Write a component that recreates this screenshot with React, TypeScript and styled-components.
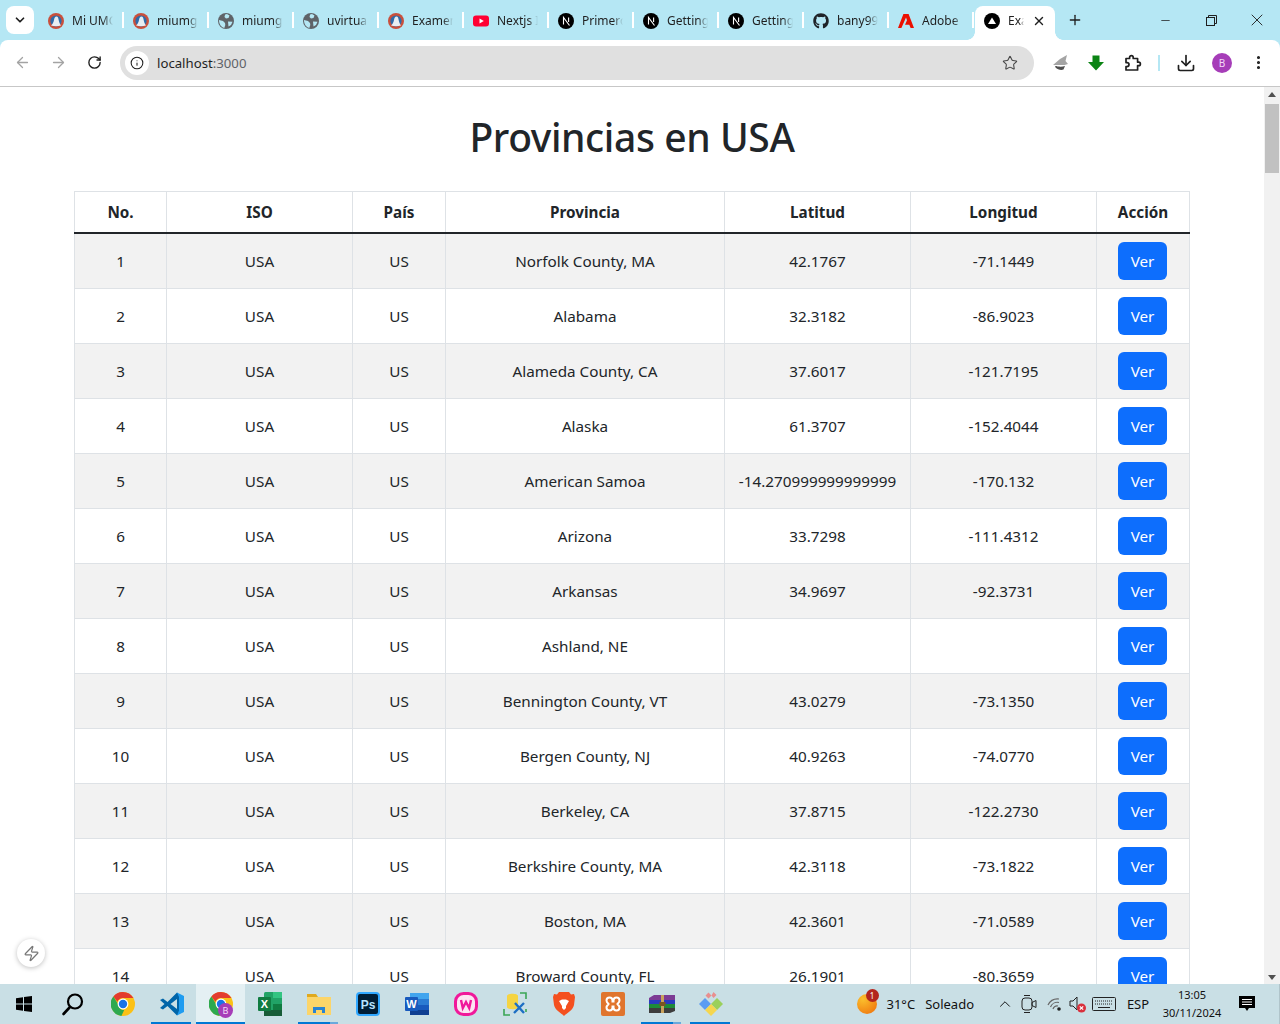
import React from "react";
import styled, { createGlobalStyle } from "styled-components";
import {
  ArrowLeft,
  ArrowRight,
  ChevronDown,
  ChevronUp,
  Download,
  Info,
  Minus,
  MoreVertical,
  Plus,
  RotateCw,
  Star,
  X,
  Zap,
} from "lucide-react";
import { FaGithub } from "react-icons/fa";

const FONT = `"Noto Sans", "Open Sans", "Liberation Sans", sans-serif`;

const GlobalStyle = createGlobalStyle`
  html, body { margin: 0; padding: 0; height: 100%; overflow: hidden; }
  body { font-family: ${FONT}; color: #212529; background: #fff; }
  * { box-sizing: border-box; }
`;

const Screen = styled.div`
  width: 1280px;
  height: 1024px;
  display: flex;
  flex-direction: column;
  overflow: hidden;
`;

/* ---------- browser chrome ---------- */

const BrowserTop = styled.header`
  background: #b5e7f4;
  flex: none;
`;

const TabStrip = styled.div`
  height: 40px;
  display: flex;
  align-items: flex-start;
  padding-left: 6px;
`;

const TabSearch = styled.button`
  width: 28px;
  height: 28px;
  margin: 6px 4px 0 0;
  padding: 0;
  border: 0;
  border-radius: 8px;
  background: #fff;
  display: flex;
  align-items: center;
  justify-content: center;
  color: #1f1f1f;
`;

const Tab = styled.div<{ $active?: boolean }>`
  position: relative;
  flex: none;
  width: ${(p) => (p.$active ? "80px" : "85px")};
  height: 34px;
  margin-top: 6px;
  padding: 0 ${(p) => (p.$active ? "9px" : "10px")} 4px ${(p) => (p.$active ? "9px" : "10px")};
  margin-left: ${(p) => (p.$active ? "2px" : "0")};
  display: flex;
  align-items: center;
  gap: 8px;
  background: ${(p) => (p.$active ? "#fff" : "transparent")};
  border-radius: 8px 8px 0 0;
  color: #1f1f1f;

  ${(p) =>
    p.$active
      ? `
    &::before, &::after {
      content: "";
      position: absolute;
      bottom: 0;
      width: 8px;
      height: 8px;
    }
    &::before { left: -8px; background: radial-gradient(circle at 0 0, transparent 7.5px, #fff 8px); }
    &::after { right: -8px; background: radial-gradient(circle at 100% 0, transparent 7.5px, #fff 8px); }
  `
      : `
    &::after {
      content: "";
      position: absolute;
      right: -1px;
      top: 6px;
      width: 2px;
      height: 16px;
      background: #fff;
    }
  `}
`;

const TabLabel = styled.span`
  flex: 1;
  min-width: 0;
  overflow: hidden;
  white-space: nowrap;
  font-size: 12px;
  line-height: 16px;
  -webkit-mask-image: linear-gradient(to right, #000 76%, transparent 100%);
  mask-image: linear-gradient(to right, #000 76%, transparent 100%);
`;

const TabClose = styled.span`
  display: flex;
  flex: none;
  color: #1f1f1f;
`;

const NewTab = styled.div`
  width: 20px;
  margin: 12px 0 0 10px;
  display: flex;
  justify-content: center;
  color: #1f1f1f;
`;

const WindowControls = styled.div`
  margin-left: auto;
  display: flex;
  height: 40px;
`;

const WindowButton = styled.div`
  width: 46px;
  display: flex;
  align-items: center;
  justify-content: center;
  color: #1f1f1f;
`;

const Toolbar = styled.div`
  height: 47px;
  padding: 6px 0 7px 4px;
  display: flex;
  align-items: center;
  background: #fff;
  border-radius: 8px 8px 0 0;
  border-bottom: 1px solid #c7c7c7;
`;

const NavButton = styled.div<{ $off?: boolean; $w?: number }>`
  width: ${(p) => p.$w ?? 36}px;
  flex: none;
  display: flex;
  align-items: center;
  justify-content: center;
  color: ${(p) => (p.$off ? "#a3a3a3" : "#1f1f1f")};
`;

const Omnibox = styled.div`
  width: 914px;
  height: 34px;
  margin: 0 9px 0 8px;
  padding: 0 16px 0 5px;
  flex: none;
  display: flex;
  align-items: center;
  background: #e0e0e0;
  border-radius: 17px;
`;

const SiteChip = styled.div`
  width: 24px;
  height: 24px;
  border-radius: 50%;
  background: #fff;
  display: flex;
  align-items: center;
  justify-content: center;
  color: #1f1f1f;
`;

const Url = styled.div`
  margin-left: 8px;
  flex: 1;
  font-size: 13.2px;
  color: #1f1f1f;
  span {
    color: #5f6368;
  }
`;

const StarSlot = styled.div`
  display: flex;
  color: #474747;
`;

const ToolbarDivider = styled.div`
  width: 2px;
  height: 16px;
  margin: 0 8px 0 5px;
  background: #b5e7f4;
  flex: none;
`;

const Avatar = styled.div<{ $size?: number }>`
  width: ${(p) => p.$size ?? 20}px;
  height: ${(p) => p.$size ?? 20}px;
  border-radius: 50%;
  background: #a63db8;
  color: #f3d9f7;
  font-size: ${(p) => ((p.$size ?? 20) > 16 ? 10 : 9)}px;
  display: flex;
  align-items: center;
  justify-content: center;
`;

/* ---------- page ---------- */

const Viewport = styled.div`
  position: relative;
  flex: 1;
  min-height: 0;
  display: flex;
  overflow: hidden;
`;

const Page = styled.main`
  flex: 1;
  min-width: 0;
  overflow: hidden;
  padding: 26px 74px 0;
`;

const Title = styled.h1`
  margin: 0 0 30px;
  font-size: 39px;
  line-height: 48px;
  font-weight: 500;
  letter-spacing: -0.4px;
  text-align: center;
`;

const Table = styled.table`
  width: 1115px;
  table-layout: fixed;
  border-collapse: collapse;
  font-size: 15.25px;
  line-height: 24px;
`;

const Col = styled.col<{ $width: number }>`
  width: ${(p) => p.$width}px;
`;

const Th = styled.th`
  height: 41px;
  padding: 8px;
  border: 1px solid #dee2e6;
  border-bottom: 2px solid #212529;
  font-weight: 700;
  text-align: center;
`;

const Row = styled.tr<{ $striped: boolean }>`
  background: ${(p) => (p.$striped ? "#f2f2f2" : "#fff")};
`;

const Td = styled.td`
  height: 55px;
  padding: 8px;
  border: 1px solid #dee2e6;
  text-align: center;
  white-space: nowrap;
`;

const VerButton = styled.button`
  width: 49px;
  height: 38px;
  padding: 0;
  border: 0;
  border-radius: 6px;
  background: #0d6efd;
  color: #fff;
  font: inherit;
  display: block;
  margin: 0 0 0 13px;
`;

const Scrollbar = styled.aside`
  width: 16px;
  flex: none;
  background: #f1f1f1;
  display: flex;
  flex-direction: column;
  align-items: center;
  justify-content: space-between;
  position: relative;
`;

const ScrollArrow = styled.div<{ $down?: boolean }>`
  margin: ${(p) => (p.$down ? "0 0 4px" : "5px 0 0")};
  width: 0;
  height: 0;
  border-left: 4.5px solid transparent;
  border-right: 4.5px solid transparent;
  ${(p) => (p.$down ? "border-top: 5px solid #505050;" : "border-bottom: 5px solid #505050;")}
`;

const ScrollThumb = styled.div`
  position: absolute;
  top: 17px;
  left: 1px;
  width: 14px;
  height: 69px;
  background: #c1c1c1;
`;

const DevBadge = styled.div`
  position: absolute;
  left: 17px;
  bottom: 17px;
  width: 28px;
  height: 28px;
  border-radius: 50%;
  background: #fff;
  box-shadow: 0 1px 5px rgba(0, 0, 0, 0.25);
  display: flex;
  align-items: center;
  justify-content: center;
  color: #777;
`;

/* ---------- taskbar ---------- */

const Taskbar = styled.footer`
  height: 40px;
  flex: none;
  display: flex;
  align-items: center;
  background: #c9dfe5;
  border-right: 1px solid #b0c4ca;
  position: relative;
  z-index: 1;
  color: #111;
`;

const TaskSlot = styled.div<{ $w?: number; $active?: boolean; $running?: boolean; $more?: boolean }>`
  position: relative;
  width: ${(p) => p.$w ?? 49}px;
  height: 40px;
  flex: none;
  display: flex;
  align-items: center;
  justify-content: center;
  background: ${(p) => (p.$active ? "#e4f0f3" : "transparent")};

  ${(p) =>
    p.$running
      ? `&::after {
    content: "";
    position: absolute;
    bottom: 0;
    left: ${p.$active ? 0 : 4}px;
    right: ${p.$active ? 0 : 5}px;
    height: 2px;
    background: ${p.$more ? "linear-gradient(to right, #0078d4 80%, #6aa9dc 80%)" : "#0078d4"};
  }`
      : ""}
`;

const ChromeBadge = styled.div`
  position: absolute;
  right: 12px;
  bottom: 6px;
`;

const Tray = styled.div`
  margin-left: auto;
  display: flex;
  align-items: center;
  height: 40px;
  font-size: 13px;
`;

const Weather = styled.div`
  position: relative;
  width: 20px;
  height: 20px;
  margin-right: 10px;
  border-radius: 50%;
  background: radial-gradient(circle at 30% 25%, #fbc02d, #f0790f 85%);
`;

const WeatherBadge = styled.div`
  position: absolute;
  top: -5px;
  right: -2px;
  width: 13px;
  height: 13px;
  border-radius: 50%;
  background: #b3261e;
  color: #fff;
  font-size: 8px;
  line-height: 13px;
  text-align: center;
`;

const TrayText = styled.span<{ $gap?: number }>`
  margin-right: ${(p) => p.$gap ?? 0}px;
  white-space: nowrap;
`;

const TraySlot = styled.div<{ $w: number }>`
  width: ${(p) => p.$w}px;
  display: flex;
  justify-content: center;
  align-items: center;
  flex: none;
`;

const Clock = styled.div`
  width: 62px;
  margin-left: 7px;
  text-align: center;
  font-size: 11px;
  line-height: 18px;
`;

/* ---------- drawings ---------- */

const UmgIcon = () => (
  <svg width="16" height="16" viewBox="0 0 16 16">
    <circle cx="8" cy="8" r="8" fill="#c9503c" />
    <circle cx="8" cy="8" r="5.600" fill="#2f6aa8" />
    <path d="M3 12.500c1.500-1 2.500-3 3-5.500.4-2 1-3.500 2.500-3.500S10.300 5 10.800 7.500c.4 2 1.200 3.800 2.200 5-3 1-7 1-10 0z" fill="#e9eef2" />
  </svg>
);

const GlobeIcon = () => (
  <svg width="16" height="16" viewBox="0 0 16 16">
    <circle cx="8" cy="8" r="8" fill="#5f6368" />
    <path d="M9 1 11.500 2.500 10.500 5l-2.500.6L6.500 4l.6-2.500zM1 7 5 8l2 2 .3 2-1 3C3 14 1 11 1 7zM10 8.500l4.500.3-1.500 3.200-2.500 1.500z" fill="#b5e7f4" />
  </svg>
);

const YoutubeIcon = () => (
  <svg width="16" height="16" viewBox="0 0 16 16">
    <rect y="2.500" width="16" height="11" rx="3" fill="#ff0033" />
    <path d="M6.500 5.500v5L10.800 8z" fill="#fff" />
  </svg>
);

const NextIcon = () => (
  <svg width="16" height="16" viewBox="0 0 16 16">
    <circle cx="8" cy="8" r="8" fill="#000" />
    <path d="M5.500 11.500v-7l6 8M10.600 4.500v4.500" stroke="#fff" strokeWidth="1.100" fill="none" />
  </svg>
);

const AdobeIcon = () => (
  <svg width="16" height="16" viewBox="0 0 16 16">
    <path d="M5.400 1h5.200L16 15h-3.400l-1.300-3.200H7L9 7.200 8 4.600 3.400 15H0z" fill="#eb1000" />
  </svg>
);

const VercelIcon = () => (
  <svg width="16" height="16" viewBox="0 0 16 16">
    <circle cx="8" cy="8" r="8" fill="#000" />
    <path d="M8 4.600 12 11H4z" fill="#fff" />
  </svg>
);

const SharkIcon = () => (
  <svg width="18" height="18" viewBox="0 0 18 18">
    <path d="M1 11 8 5l7-4-1.500 6L16 10l-5 1.500z" fill="#a4a4a4" />
    <path d="M3 11.500c3 1.500 7 1.500 10 .5l-1.500 3.500c-2.500 1-6 0-8-2z" fill="#4f4f4f" />
    <path d="M3 11.500h9" stroke="#fff" strokeWidth="1" />
  </svg>
);

const GreenArrow = () => (
  <svg width="18" height="18" viewBox="0 0 18 18">
    <path d="M5.500 1.500h7V8H17l-8 8.500L1 8h4.500z" fill="#0b8414" />
  </svg>
);

const PuzzleIcon = () => (
  <svg width="18" height="18" viewBox="0 0 18 18">
    <path
      d="M2 4.500h3.600V3.400a1.800 1.800 0 0 1 3.600 0v1.100h4.400v3.700h1.100a1.700 1.700 0 0 1 0 3.400h-1.100V16H2v-3.400h1a2 2 0 0 0 0-4H2z"
      fill="none"
      stroke="#1f1f1f"
      strokeWidth="1.700"
      strokeLinejoin="round"
    />
  </svg>
);

const ChromeIcon = ({ size = 24 }: { size?: number }) => (
  <svg width={size} height={size} viewBox="0 0 24 24">
    <circle cx="12" cy="12" r="12" fill="#fbc116" />
    <path d="M12 0a12 12 0 0 1 10.400 6H12a6 6 0 0 0-5.600 3.800L2.400 4.400A12 12 0 0 1 12 0z" fill="#e33b2e" />
    <path d="M2.400 4.400 7.600 13a5 5 0 0 0 5.600 4.900l-2.800 6A12 12 0 0 1 2.400 4.400z" fill="#2da94f" />
    <circle cx="12" cy="12" r="5.400" fill="#fff" />
    <circle cx="12" cy="12" r="4.200" fill="#1a73e8" />
  </svg>
);

const WindowsIcon = () => (
  <svg width="16" height="16" viewBox="0 0 16 16">
    <path d="M0 2.200 7 1.200v6.400H0zM8 1 16 0v7.600H8zM0 8.500h7v6.300l-7-1zM8 8.500h8V16l-8-1.100z" fill="#000" />
  </svg>
);

const SearchGlass = () => (
  <svg width="24" height="24" viewBox="0 0 24 24">
    <circle cx="14" cy="9.500" r="7" fill="none" stroke="#000" strokeWidth="2.200" />
    <path d="M9 15 2.500 22" stroke="#000" strokeWidth="2.600" strokeLinecap="round" />
  </svg>
);

const VsCodeIcon = () => (
  <svg width="24" height="24" viewBox="0 0 24 24">
    <path d="M17 0.500 24 4v16l-7 3.500z" fill="#1f9cf0" />
    <path d="M17 .5 7.500 10 3 6.500 0 8l4.500 4L0 16l3 1.500L7.500 14l9.500 9.500 2-5V5z" fill="#0065a9" />
    <path d="M17 7v10l-6.500-5z" fill="#c9dfe5" />
  </svg>
);

const ExcelIcon = () => (
  <svg width="24" height="24" viewBox="0 0 24 24">
    <rect x="6" y="0" width="18" height="24" rx="1.500" fill="#21a366" />
    <rect x="15" y="0" width="9" height="6" fill="#33c481" />
    <rect x="15" y="12" width="9" height="6" fill="#107c41" />
    <rect x="6" y="18" width="18" height="6" fill="#185c37" />
    <rect x="0" y="5" width="13" height="14" rx="1" fill="#107c41" />
    <text x="6.500" y="16" fontSize="11" fontWeight="700" fill="#fff" textAnchor="middle" fontFamily="Liberation Sans">X</text>
  </svg>
);

const FolderIcon = () => (
  <svg width="24" height="24" viewBox="0 0 24 24">
    <path d="M0 2h9l2 3H0z" fill="#e0a91e" />
    <rect y="5" width="24" height="18" fill="#fcd569" />
    <path d="M6 21v-6h12v6h-3v-3H9v3z" fill="#2a84d2" />
  </svg>
);

const PhotoshopIcon = () => (
  <svg width="24" height="24" viewBox="0 0 24 24">
    <rect x="1" y="1" width="22" height="22" rx="3" fill="#001e36" stroke="#31a8ff" strokeWidth="2" />
    <text x="12" y="16.500" fontSize="12" fontWeight="700" fill="#b7e3ff" textAnchor="middle" fontFamily="Liberation Sans">Ps</text>
  </svg>
);

const WordIcon = () => (
  <svg width="24" height="24" viewBox="0 0 24 24">
    <rect x="5" y="1" width="19" height="22" rx="1.500" fill="#2b7cd3" />
    <rect x="5" y="1" width="19" height="6" fill="#41a5ee" />
    <rect x="5" y="13" width="19" height="5" fill="#185abd" />
    <rect x="5" y="18" width="19" height="5" fill="#103f91" />
    <rect x="0" y="5" width="13" height="14" rx="1" fill="#185abd" />
    <text x="6.500" y="16" fontSize="11" fontWeight="700" fill="#fff" textAnchor="middle" fontFamily="Liberation Sans">W</text>
  </svg>
);

const WampIcon = () => (
  <svg width="24" height="24" viewBox="0 0 24 24">
    <rect x="1.500" y="1.500" width="21" height="21" rx="8" fill="#fde4f2" stroke="#f0189a" strokeWidth="3" />
    <path d="M7 8l1.800 8L12 10l3.200 6L17 8" fill="none" stroke="#f0189a" strokeWidth="2.400" />
  </svg>
);

const DbToolIcon = () => (
  <svg width="24" height="24" viewBox="0 0 24 24">
    <path d="M4 4c0-3 11-3 11 0v11c0 3-11 3-11 0z" fill="#f5d442" />
    <path d="M17 1h6v6M1 17v6h6M23 17v3" fill="none" stroke="#3aa655" strokeWidth="1.600" />
    <path d="M11 21 21 11M12 11l9 10" stroke="#1d6fc4" strokeWidth="2.400" />
  </svg>
);

const BraveIcon = () => (
  <svg width="22" height="24" viewBox="0 0 22 24">
    <path d="M6 0h10l2 2.500 3-.5 1 3-1 8c-1 5-7 8-10 11C8 21 2 18 1 13L0 5l1-3 3 .5z" fill="#f4501f" />
    <path d="M6 9l3-1.500h4L16 9l-3 5v2l-2 2-2-2v-2z" fill="#fff" />
  </svg>
);

const XamppIcon = () => (
  <svg width="24" height="24" viewBox="0 0 24 24">
    <rect width="24" height="24" rx="2" fill="#e0752d" />
    <path
      d="M8.500 5.500a3 3 0 0 0-3 3c0 1.600 1 2.500 2 3.500-1 1-2 1.900-2 3.500a3 3 0 0 0 6 0v-1h1v1a3 3 0 0 0 6 0c0-1.600-1-2.500-2-3.500 1-1 2-1.900 2-3.500a3 3 0 0 0-6 0v1h-1v-1a3 3 0 0 0-3-3z"
      fill="none"
      stroke="#fff"
      strokeWidth="2"
    />
  </svg>
);

const WinrarIcon = () => (
  <svg width="26" height="20" viewBox="0 0 26 20">
    <path d="M0 4l5-3h21v5H0z" fill="#7c3b94" />
    <rect y="6" width="26" height="4" fill="#2a3ac0" />
    <rect y="10" width="26" height="4" fill="#1d8a3a" />
    <path d="M0 14h26v3l-5 2H0z" fill="#3d3d3d" />
    <rect x="12" y="1" width="3" height="18" fill="#c9a25c" />
    <rect x="10.500" y="8" width="6" height="4" fill="#7a5522" />
  </svg>
);

const GitToolIcon = () => (
  <svg width="26" height="26" viewBox="0 0 26 26">
    <path d="M7 7l6 6-6 6-6-6z" fill="#5b9cf2" />
    <path d="M19 7l6 6-6 6-6-6z" fill="#9ad05b" />
    <path d="M13 13l6 6-6 6-6-6z" fill="#f5d64e" />
    <path d="M10.500 1.500l3 3-3 3-3-3zM15.500 1l3 3-3 3-2-2.500z" fill="#e98f8f" />
  </svg>
);

const MeetIcon = () => (
  <svg width="16" height="20" viewBox="0 0 16 20" fill="none" stroke="#222" strokeWidth="1">
    <rect x="1" y="4" width="10" height="12" rx="3" />
    <path d="M11 8.500 15 6.500v7l-4-2zM3 1.500h6M3 18.500h6" />
  </svg>
);

const WifiIcon = () => (
  <svg width="16" height="16" viewBox="0 0 16 16" fill="none" stroke="#666" strokeWidth="1.200">
    <path d="M1 9a11 11 0 0 1 11-6M3.500 11A7.500 7.500 0 0 1 12 6.500M6 13a4 4 0 0 1 5-3" />
    <circle cx="12" cy="13" r="1.800" fill="#222" stroke="none" />
  </svg>
);

const SpeakerMuted = () => (
  <svg width="17" height="18" viewBox="0 0 17 18">
    <path d="M1 6h3l4-4v13l-4-4H1z" fill="none" stroke="#222" strokeWidth="1" />
    <circle cx="12.500" cy="13" r="4.500" fill="#d9303c" />
    <path d="M10.800 11.300l3.400 3.400M14.200 11.300l-3.400 3.400" stroke="#fff" strokeWidth="1.200" />
  </svg>
);

const KeyboardIcon = () => (
  <svg width="24" height="14" viewBox="0 0 24 14" fill="none" stroke="#222">
    <rect x=".5" y=".5" width="23" height="13" rx="1" />
    <path d="M3 4h18M3 7h18" strokeDasharray="1 1" />
    <path d="M6 10.500h12" />
  </svg>
);

const NotificationIcon = () => (
  <svg width="18" height="18" viewBox="0 0 18 18">
    <path d="M1 1h16v12h-6l-2 3-2-3H1z" fill="#000" />
    <path d="M4 4.500h10M4 7h10M4 9.500h10" stroke="#fff" strokeWidth="1" />
  </svg>
);

/* ---------- data ---------- */

const tabs: { icon: React.ReactNode; label: string }[] = [
  { icon: <UmgIcon />, label: "Mi UMG" },
  { icon: <UmgIcon />, label: "miumg" },
  { icon: <GlobeIcon />, label: "miumg" },
  { icon: <GlobeIcon />, label: "uvirtual" },
  { icon: <UmgIcon />, label: "Examen" },
  { icon: <YoutubeIcon />, label: "Nextjs I" },
  { icon: <NextIcon />, label: "Primero" },
  { icon: <NextIcon />, label: "Getting" },
  { icon: <NextIcon />, label: "Getting" },
  { icon: <FaGithub size={16} color="#1f2328" />, label: "bany99" },
  { icon: <AdobeIcon />, label: "Adobe" },
];

const columns = [
  { title: "No.", width: 92 },
  { title: "ISO", width: 186 },
  { title: "País", width: 93 },
  { title: "Provincia", width: 279 },
  { title: "Latitud", width: 186 },
  { title: "Longitud", width: 186 },
  { title: "Acción", width: 93 },
];

const provinces = [
  ["Norfolk County, MA", "42.1767", "-71.1449"],
  ["Alabama", "32.3182", "-86.9023"],
  ["Alameda County, CA", "37.6017", "-121.7195"],
  ["Alaska", "61.3707", "-152.4044"],
  ["American Samoa", "-14.270999999999999", "-170.132"],
  ["Arizona", "33.7298", "-111.4312"],
  ["Arkansas", "34.9697", "-92.3731"],
  ["Ashland, NE", "", ""],
  ["Bennington County, VT", "43.0279", "-73.1350"],
  ["Bergen County, NJ", "40.9263", "-74.0770"],
  ["Berkeley, CA", "37.8715", "-122.2730"],
  ["Berkshire County, MA", "42.3118", "-73.1822"],
  ["Boston, MA", "42.3601", "-71.0589"],
  ["Broward County, FL", "26.1901", "-80.3659"],
];

export default function App() {
  return (
    <Screen>
      <GlobalStyle />
      <BrowserTop>
        <TabStrip>
          <TabSearch>
            <ChevronDown size={14} strokeWidth={3} />
          </TabSearch>
          {tabs.map((tab, i) => (
            <Tab key={i}>
              {tab.icon}
              <TabLabel>{tab.label}</TabLabel>
            </Tab>
          ))}
          <Tab $active>
            <VercelIcon />
            <TabLabel>Exam</TabLabel>
            <TabClose>
              <X size={14} strokeWidth={2.4} />
            </TabClose>
          </Tab>
          <NewTab>
            <Plus size={16} strokeWidth={2} />
          </NewTab>
          <WindowControls>
            <WindowButton>
              <Minus size={13} strokeWidth={1.4} />
            </WindowButton>
            <WindowButton>
              <svg width="11" height="11" viewBox="0 0 11 11" fill="none" stroke="#1f1f1f">
                <rect x=".5" y="2.500" width="8" height="8" />
                <path d="M2.500 2.500V.5h8v8H8.500" />
              </svg>
            </WindowButton>
            <WindowButton>
              <X size={20} strokeWidth={1.1} />
            </WindowButton>
          </WindowControls>
        </TabStrip>
        <Toolbar>
          <NavButton $off>
            <ArrowLeft size={17} strokeWidth={1.8} />
          </NavButton>
          <NavButton $off>
            <ArrowRight size={17} strokeWidth={1.8} />
          </NavButton>
          <NavButton>
            <RotateCw size={15} strokeWidth={2.2} />
          </NavButton>
          <Omnibox>
            <SiteChip>
              <Info size={14} strokeWidth={1.8} />
            </SiteChip>
            <Url>
              localhost<span>:3000</span>
            </Url>
            <StarSlot>
              <Star size={16} strokeWidth={1.6} />
            </StarSlot>
          </Omnibox>
          <NavButton $w={36}>
            <SharkIcon />
          </NavButton>
          <NavButton $w={34}>
            <GreenArrow />
          </NavButton>
          <NavButton $w={40}>
            <PuzzleIcon />
          </NavButton>
          <ToolbarDivider />
          <NavButton $w={36}>
            <Download size={20} strokeWidth={2} />
          </NavButton>
          <NavButton $w={36}>
            <Avatar>B</Avatar>
          </NavButton>
          <NavButton $w={36}>
            <MoreVertical size={17} strokeWidth={2.4} />
          </NavButton>
        </Toolbar>
      </BrowserTop>

      <Viewport>
        <Page>
          <Title>Provincias en USA</Title>
          <Table>
            <colgroup>
              {columns.map((c) => (
                <Col key={c.title} $width={c.width} />
              ))}
            </colgroup>
            <thead>
              <tr>
                {columns.map((c) => (
                  <Th key={c.title}>{c.title}</Th>
                ))}
              </tr>
            </thead>
            <tbody>
              {provinces.map(([name, lat, lng], i) => (
                <Row key={name} $striped={i % 2 === 0}>
                  <Td>{i + 1}</Td>
                  <Td>USA</Td>
                  <Td>US</Td>
                  <Td>{name}</Td>
                  <Td>{lat}</Td>
                  <Td>{lng}</Td>
                  <Td>
                    <VerButton>Ver</VerButton>
                  </Td>
                </Row>
              ))}
            </tbody>
          </Table>
        </Page>
        <Scrollbar>
          <ScrollArrow />
          <ScrollThumb />
          <ScrollArrow $down />
        </Scrollbar>
        <DevBadge>
          <Zap size={17} strokeWidth={1.7} />
        </DevBadge>
      </Viewport>

      <Taskbar>
        <TaskSlot $w={48}>
          <WindowsIcon />
        </TaskSlot>
        <TaskSlot $w={50}>
          <SearchGlass />
        </TaskSlot>
        <TaskSlot>
          <ChromeIcon />
        </TaskSlot>
        <TaskSlot $running>
          <VsCodeIcon />
        </TaskSlot>
        <TaskSlot $running $active>
          <ChromeIcon />
          <ChromeBadge>
            <Avatar $size={15}>B</Avatar>
          </ChromeBadge>
        </TaskSlot>
        <TaskSlot>
          <ExcelIcon />
        </TaskSlot>
        <TaskSlot $running $more>
          <FolderIcon />
        </TaskSlot>
        <TaskSlot>
          <PhotoshopIcon />
        </TaskSlot>
        <TaskSlot>
          <WordIcon />
        </TaskSlot>
        <TaskSlot>
          <WampIcon />
        </TaskSlot>
        <TaskSlot>
          <DbToolIcon />
        </TaskSlot>
        <TaskSlot>
          <BraveIcon />
        </TaskSlot>
        <TaskSlot>
          <XamppIcon />
        </TaskSlot>
        <TaskSlot $running $more>
          <WinrarIcon />
        </TaskSlot>
        <TaskSlot $running>
          <GitToolIcon />
        </TaskSlot>
        <Tray>
          <Weather>
            <WeatherBadge>1</WeatherBadge>
          </Weather>
          <TrayText $gap={10}>31°C</TrayText>
          <TrayText $gap={19}>Soleado</TrayText>
          <TraySlot $w={24}>
            <ChevronUp size={18} strokeWidth={1.3} />
          </TraySlot>
          <TraySlot $w={24}>
            <MeetIcon />
          </TraySlot>
          <TraySlot $w={28}>
            <WifiIcon />
          </TraySlot>
          <TraySlot $w={17}>
            <SpeakerMuted />
          </TraySlot>
          <TraySlot $w={36}>
            <KeyboardIcon />
          </TraySlot>
          <TraySlot $w={32}>
            <TrayText>ESP</TrayText>
          </TraySlot>
          <Clock>
            <div>13:05</div>
            <div>30/11/2024</div>
          </Clock>
          <TraySlot $w={48}>
            <NotificationIcon />
          </TraySlot>
          <TraySlot $w={8} />
        </Tray>
      </Taskbar>
    </Screen>
  );
}
